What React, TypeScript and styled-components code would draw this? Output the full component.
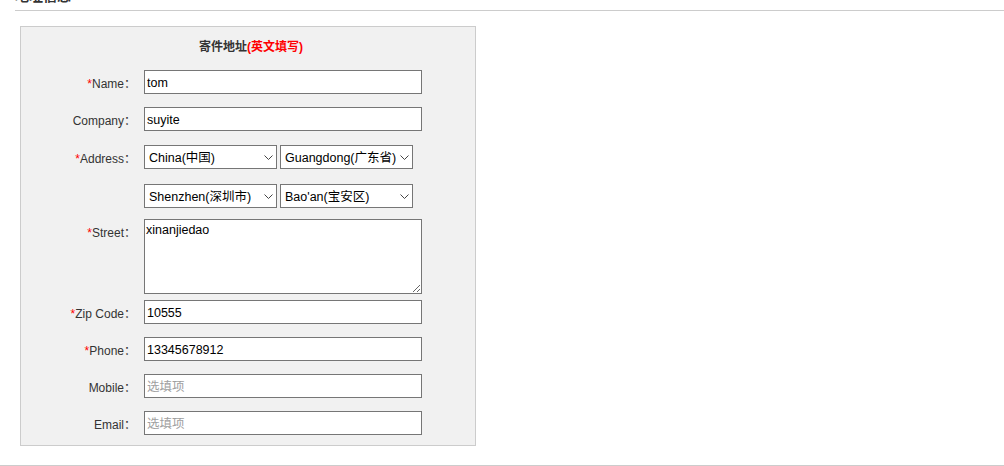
import React from 'react';
import styled, { createGlobalStyle } from 'styled-components';

const GlobalStyle = createGlobalStyle`
  html, body {
    margin: 0;
    padding: 0;
    background: #fff;
    overflow: hidden;
  }
  body {
    font-family: 'Liberation Sans', Arial, 'Noto Sans CJK SC', sans-serif;
    font-size: 12px;
    color: #333;
  }
`;

const FONT = `'Liberation Sans', Arial, 'Noto Sans CJK SC', sans-serif`;

const Page = styled.div`
  width: 1004px;
  height: 466px;
  display: flex;
  flex-direction: column;
`;

const SectionHeader = styled.h3`
  margin: -14px 0 0 15px;
  padding: 0 0 4px;
  line-height: 20px;
  font-size: 14px;
  font-weight: bold;
  color: #333;
  border-bottom: 1px solid #cccccc;
`;

const Panel = styled.div`
  margin: 15px 0 0 20px;
  width: 454px;
  padding: 12px 0 10px;
  background: #f1f1f1;
  border: 1px solid #cccccc;
`;

const PanelTitle = styled.div`
  line-height: 16px;
  font-weight: bold;
  text-align: center;
  padding-left: 6px;
  color: #333;

  & em {
    font-style: normal;
    color: #ff0000;
  }
`;

const Row = styled.div<{ $gap: number }>`
  margin-top: ${({ $gap }) => $gap}px;
  display: grid;
  grid-template-columns: 115px 1fr;
  column-gap: 8px;
  align-items: start;
`;

const Label = styled.label`
  box-sizing: border-box;
  height: 24px;
  padding-top: 2px;
  line-height: 24px;
  text-align: right;
  color: #333;
  white-space: nowrap;

  & i {
    font-style: normal;
    color: #ff0000;
  }
`;

const TextInput = styled.input`
  box-sizing: border-box;
  width: 278px;
  height: 24px;
  margin: 0;
  padding: 1px 2px 0;
  border: 1px solid #767676;
  border-radius: 0;
  background: #fff;
  font-family: ${FONT};
  font-size: 12.5px;
  color: #000;
  outline: none;

  &::placeholder {
    color: #a0a0a0;
  }
`;

const TextArea = styled.textarea`
  box-sizing: border-box;
  display: block;
  width: 278px;
  height: 75px;
  margin: 0;
  padding: 3px 1px;
  border: 1px solid #767676;
  border-radius: 0;
  background: #fff;
  font-family: ${FONT};
  font-size: 12.5px;
  color: #000;
  outline: none;
`;

const SelectGroup = styled.div`
  display: flex;
  gap: 3px;
`;

const SelectBox = styled.div`
  position: relative;
  width: 133px;
  height: 24px;
`;

const Select = styled.select`
  box-sizing: border-box;
  appearance: none;
  width: 100%;
  height: 100%;
  margin: 0;
  padding: 1px 12px 0 4px;
  border: 1px solid #767676;
  border-radius: 0;
  background: #fff;
  font-family: ${FONT};
  font-size: 12.5px;
  color: #000;
  outline: none;
`;

const Chevron = styled.svg`
  position: absolute;
  right: 4px;
  top: 10px;
  width: 9px;
  height: 5px;
  pointer-events: none;
`;

const BottomRule = styled.div`
  margin-top: auto;
  height: 1px;
  background: #cccccc;
`;

function Dropdown({ value }: { value: string }) {
  return (
    <SelectBox>
      <Select defaultValue={value}>
        <option>{value}</option>
      </Select>
      <Chevron viewBox="0 0 9 5">
        <path d="M0.5 0.5 L4.5 4.5 L8.5 0.5" fill="none" stroke="#444" strokeWidth="1" />
      </Chevron>
    </SelectBox>
  );
}

interface FieldProps {
  label: string;
  required?: boolean;
  gap: number;
  children?: React.ReactNode;
}

function Field({ label, required, gap, children }: FieldProps) {
  return (
    <Row $gap={gap}>
      <Label>
        {required && <i>*</i>}
        {label}
        {label && '：'}
      </Label>
      <div>{children}</div>
    </Row>
  );
}

export default function App() {
  return (
    <Page>
      <GlobalStyle />
      <SectionHeader>地址信息</SectionHeader>
      <Panel>
        <PanelTitle>
          寄件地址<em>(英文填写)</em>
        </PanelTitle>
        <Field label="Name" required gap={15}>
          <TextInput defaultValue="tom" />
        </Field>
        <Field label="Company" gap={13}>
          <TextInput defaultValue="suyite" />
        </Field>
        <Field label="Address" required gap={14}>
          <SelectGroup>
            <Dropdown value="China(中国)" />
            <Dropdown value="Guangdong(广东省)" />
          </SelectGroup>
        </Field>
        <Field label="" gap={15}>
          <SelectGroup>
            <Dropdown value="Shenzhen(深圳市)" />
            <Dropdown value="Bao'an(宝安区)" />
          </SelectGroup>
        </Field>
        <Field label="Street" required gap={11}>
          <TextArea defaultValue="xinanjiedao" />
        </Field>
        <Field label="Zip Code" required gap={6}>
          <TextInput defaultValue="10555" />
        </Field>
        <Field label="Phone" required gap={13}>
          <TextInput defaultValue="13345678912" />
        </Field>
        <Field label="Mobile" gap={13}>
          <TextInput placeholder="选填项" />
        </Field>
        <Field label="Email" gap={13}>
          <TextInput placeholder="选填项" />
        </Field>
      </Panel>
      <BottomRule />
    </Page>
  );
}
